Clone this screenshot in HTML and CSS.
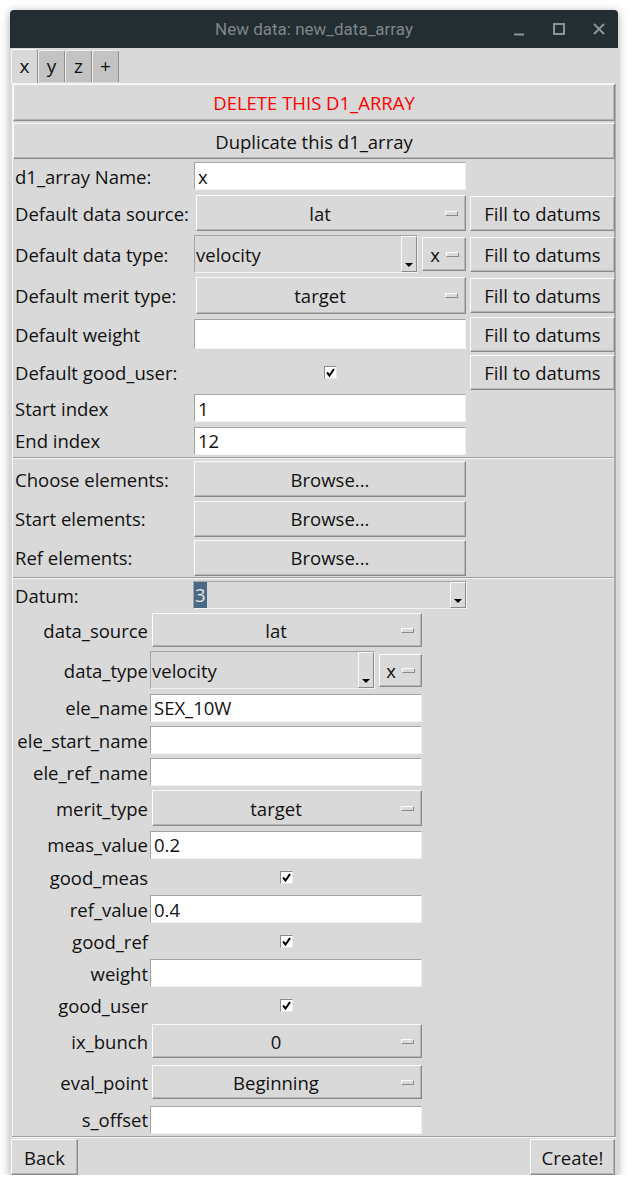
FILE: index.html
```html
<!DOCTYPE html>
<html>
<head>
<meta charset="utf-8">
<link rel="stylesheet" href="styles.css">
</head>
<body>
<div class="window">
  <div class="titlebar">
    <span class="title">New data: new_data_array</span>
    <div class="wctrls">
      <svg class="wc" width="14" height="14" viewBox="0 0 14 14"><path d="M2 12.5h10" stroke="#8a9499" stroke-width="2"/></svg>
      <svg class="wc" width="14" height="14" viewBox="0 0 14 14"><rect x="2" y="2" width="10" height="10" fill="none" stroke="#8a9499" stroke-width="2"/></svg>
      <svg class="wc" width="14" height="14" viewBox="0 0 14 14"><path d="M2 2l10 10M12 2L2 12" stroke="#8a9499" stroke-width="2"/></svg>
    </div>
  </div>
  <div class="tabs">
    <div class="tab sel">x</div>
    <div class="tab">y</div>
    <div class="tab">z</div>
    <div class="tab">+</div>
  </div>
  <div class="content">
    <div class="btn wide red h37 mt1">DELETE THIS D1_ARRAY</div>
    <div class="btn wide h36 mt2">Duplicate this d1_array</div>

    <div class="grid topgrid">
      <div class="lbl">d1_array Name:</div>
      <div class="cell"><div class="entry w272 h28">x</div></div>
      <div class="cell"></div>

      <div class="lbl">Default data source:</div>
      <div class="cell"><div class="mbtn w270 ml2 h36"><span class="mtext">lat</span><span class="ind"></span></div></div>
      <div class="cell"><div class="btn fill">Fill to datums</div></div>

      <div class="lbl">Default data type:</div>
      <div class="cell row">
        <div class="combo w224 h38"><span class="ctext">velocity</span><span class="carrow"><span class="tri"></span></span></div>
        <div class="mbtn small w44 h34"><span class="stext">x</span><span class="ind"></span></div>
      </div>
      <div class="cell"><div class="btn fill">Fill to datums</div></div>

      <div class="lbl">Default merit type:</div>
      <div class="cell"><div class="mbtn w270 ml2 h37"><span class="mtext">target</span><span class="ind"></span></div></div>
      <div class="cell"><div class="btn fill">Fill to datums</div></div>

      <div class="lbl">Default weight</div>
      <div class="cell"><div class="entry w272 h30"></div></div>
      <div class="cell"><div class="btn fill">Fill to datums</div></div>

      <div class="lbl">Default good_user:</div>
      <div class="cell center w272"><span class="chk"><svg width="11" height="11" viewBox="0 0 11 11"><path d="M2 5.5l2.5 3L9 2" fill="none" stroke="#000" stroke-width="2"/></svg></span></div>
      <div class="cell"><div class="btn fill">Fill to datums</div></div>

      <div class="lbl">Start index</div>
      <div class="cell"><div class="entry w272 h28">1</div></div>
      <div class="cell"></div>

      <div class="lbl">End index</div>
      <div class="cell"><div class="entry w272 h28">12</div></div>
      <div class="cell"></div>
    </div>

    <div class="sep"></div>

    <div class="grid browsegrid">
      <div class="lbl">Choose elements:</div>
      <div class="cell"><div class="btn w272 h36">Browse...</div></div>
      <div class="lbl">Start elements:</div>
      <div class="cell"><div class="btn w272 h36">Browse...</div></div>
      <div class="lbl">Ref elements:</div>
      <div class="cell"><div class="btn w272 h36">Browse...</div></div>
    </div>

    <div class="sep"></div>

    <div class="grid datumrow">
      <div class="lbl">Datum:</div>
      <div class="cell"><div class="combo datum w274 h28"><span class="ctext"><span class="selnum">3</span></span><span class="carrow"><span class="tri"></span></span></div></div>
    </div>

    <div class="grid dgrid">
      <div class="rl">data_source</div>
      <div class="cell"><div class="mbtn w270 ml2 h34"><span class="mtext">lat</span><span class="ind"></span></div></div>

      <div class="rl">data_type</div>
      <div class="cell row">
        <div class="combo w225 h38"><span class="ctext">velocity</span><span class="carrow"><span class="tri"></span></span></div>
        <div class="mbtn small w43 h33"><span class="stext">x</span><span class="ind"></span></div>
      </div>

      <div class="rl">ele_name</div>
      <div class="cell"><div class="entry w272 h28">SEX_10W</div></div>

      <div class="rl">ele_start_name</div>
      <div class="cell"><div class="entry w272 h28"></div></div>

      <div class="rl">ele_ref_name</div>
      <div class="cell"><div class="entry w272 h28"></div></div>

      <div class="rl">merit_type</div>
      <div class="cell"><div class="mbtn w270 ml2 h36"><span class="mtext">target</span><span class="ind"></span></div></div>

      <div class="rl">meas_value</div>
      <div class="cell"><div class="entry w272 h28">0.2</div></div>

      <div class="rl">good_meas</div>
      <div class="cell center w272"><span class="chk"><svg width="11" height="11" viewBox="0 0 11 11"><path d="M2 5.5l2.5 3L9 2" fill="none" stroke="#000" stroke-width="2"/></svg></span></div>

      <div class="rl">ref_value</div>
      <div class="cell"><div class="entry w272 h28">0.4</div></div>

      <div class="rl">good_ref</div>
      <div class="cell center w272"><span class="chk"><svg width="11" height="11" viewBox="0 0 11 11"><path d="M2 5.5l2.5 3L9 2" fill="none" stroke="#000" stroke-width="2"/></svg></span></div>

      <div class="rl">weight</div>
      <div class="cell"><div class="entry w272 h28"></div></div>

      <div class="rl">good_user</div>
      <div class="cell center w272"><span class="chk"><svg width="11" height="11" viewBox="0 0 11 11"><path d="M2 5.5l2.5 3L9 2" fill="none" stroke="#000" stroke-width="2"/></svg></span></div>

      <div class="rl">ix_bunch</div>
      <div class="cell"><div class="mbtn w270 ml2 h34"><span class="mtext">0</span><span class="ind"></span></div></div>

      <div class="rl">eval_point</div>
      <div class="cell"><div class="mbtn w270 ml2 h34"><span class="mtext">Beginning</span><span class="ind"></span></div></div>

      <div class="rl">s_offset</div>
      <div class="cell"><div class="entry w272 h28"></div></div>
    </div>
  </div>
  <div class="sep bsep"></div>
  <div class="bottombar">
    <div class="btn back">Back</div>
    <div class="btn create">Create!</div>
  </div>
</div>
</body>
</html>
```

FILE: styles.css
```css
* { box-sizing: border-box; }
html, body { margin: 0; padding: 0; }
body {
  background: #ffffff;
  font-family: "Open Sans", "Noto Sans", sans-serif;
  font-size: 18.5px;
  color: #111;
}
.window {
  margin: 10px 0 0 10px;
  width: 608px;
  background: #d9d9d9;
  box-shadow: 0 2px 10px rgba(0,0,0,0.35);
  border-radius: 4px 4px 0 0;
  display: flex;
  flex-direction: column;
}
.titlebar {
  height: 38px;
  background: #232d32;
  border-radius: 4px 4px 0 0;
  position: relative;
  display: flex;
  align-items: center;
  justify-content: center;
}
.title {
  font-family: Roboto, "Noto Sans", sans-serif;
  font-size: 17px;
  color: #7d878c;
}
.wctrls {
  position: absolute;
  right: 12px;
  top: 12px;
  display: flex;
  gap: 26px;
}
.wc { display: block; }
.tabs {
  height: 35px;
  display: flex;
  align-items: flex-end;
  padding-left: 1px;
}
.tab {
  width: 27px;
  height: 32px;
  margin-bottom: 1px;
  background: #c3c3c3;
  border: 1px solid #eeeeee;
  border-right-color: #8f8f8f;
  border-bottom: none;
  border-radius: 3px 3px 0 0;
  display: flex;
  align-items: center;
  justify-content: center;
  font-size: 19px;
  padding-bottom: 2px;
}
.tab.sel {
  background: #d9d9d9;
  height: 34px;
  margin-bottom: 0;
  border-color: #f4f4f4;
  border-right-color: #8f8f8f;
}
.content {
  margin: 0 2px;
  border-top: 2px solid #f2f2f2;
  border-left: 1px solid #f2f2f2;
  border-right: 2px solid #a9a9a9;
  display: flex;
  flex-direction: column;
}
.btn {
  background: #d9d9d9;
  border: 1px solid;
  border-color: #fbfbfb #8a8a8a #8a8a8a #fbfbfb;
  box-shadow: inset -1px -1px 0 #b5b5b5;
  display: flex;
  align-items: center;
  justify-content: center;
  white-space: nowrap;
}
.wide { width: 602px; }
.red { color: #ff0000; }
.mt1 { margin-top: -1px; }
.mt2 { margin-top: 2px; }
.h28 { height: 28px; }
.h30 { height: 30px; }
.h33 { height: 33px; }
.h34 { height: 34px; }
.h36 { height: 36px; }
.h37 { height: 37px; }
.h38 { height: 38px; }
.w43 { width: 43px; }
.w44 { width: 44px; }
.w224 { width: 224px; }
.w225 { width: 225px; }
.w270 { width: 270px; }
.w272 { width: 272px; }
.w274 { width: 274px; }
.ml2 { margin-left: 2px; }
.grid { display: grid; }
.topgrid {
  grid-template-columns: 181px 276px 145px;
  grid-template-rows: 34px 40px 42px 40px 38px 39px 32px 33px;
  align-items: center;
}
.browsegrid {
  grid-template-columns: 181px 276px;
  grid-template-rows: 40px 39px 39px;
  align-items: center;
}
.datumrow {
  grid-template-columns: 180px 276px;
  grid-template-rows: 32px;
  align-items: center;
}
.dgrid {
  grid-template-columns: 137px 276px;
  grid-template-rows: 38px 42px 33px 32px 32px 40px 33px 32px 32px 32px 32px 32px 40px 42px 33px;
  align-items: center;
}
.lbl {
  padding-left: 2px;
  white-space: nowrap;
}
.rl {
  text-align: right;
  padding-right: 2px;
  white-space: nowrap;
}
.cell { display: flex; align-items: center; }
.cell.row { gap: 4px; }
.cell.center { justify-content: center; }
.fill { width: 145px; height: 35px; }
.entry {
  background: #ffffff;
  border: 1px solid;
  border-color: #a3a3a3 #f3f3f3 #f3f3f3 #a3a3a3;
  display: flex;
  align-items: center;
  padding-left: 3px;
  white-space: nowrap;
}
.mbtn {
  background: #d9d9d9;
  border: 1px solid;
  border-color: #fbfbfb #8a8a8a #8a8a8a #fbfbfb;
  box-shadow: inset -1px -1px 0 #b5b5b5;
  display: flex;
  align-items: center;
}
.mtext {
  flex: 1;
  text-align: center;
  padding-left: 2px;
}
.ind {
  width: 13px;
  height: 5px;
  background: #d9d9d9;
  border: 1px solid;
  border-color: #fafafa #8a8a8a #8a8a8a #fafafa;
  margin-right: 7px;
  margin-left: 4px;
}
.mbtn.small .stext {
  flex: 1;
  text-align: right;
  padding-right: 2px;
}
.mbtn.small .ind { margin-left: 4px; margin-right: 6px; }
.combo {
  background: #d9d9d9;
  border: 1px solid;
  border-color: #a3a3a3 #f3f3f3 #f3f3f3 #a3a3a3;
  display: flex;
  align-items: stretch;
}
.ctext {
  flex: 1;
  display: flex;
  align-items: center;
  padding-left: 1px;
  white-space: nowrap;
}
.carrow {
  width: 16px;
  background: #d9d9d9;
  border: 1px solid;
  border-color: #f8f8f8 #8a8a8a #8a8a8a #f8f8f8;
  display: flex;
  align-items: flex-end;
  justify-content: center;
  padding-bottom: 4px;
}
.tri {
  width: 0;
  height: 0;
  border-left: 4px solid transparent;
  border-right: 4px solid transparent;
  border-top: 4px solid #000;
}
.combo.datum .ctext { padding-left: 0; }
.selnum {
  background: #4a6984;
  color: #e6e6e6;
  padding: 0 1px;
  line-height: 26px;
}
.chk {
  width: 13px;
  height: 13px;
  background: #ffffff;
  border: 1px solid;
  border-color: #8a8a8a #e8e8e8 #e8e8e8 #8a8a8a;
  display: flex;
  align-items: center;
  justify-content: center;
}
.chk svg { display: block; }
.sep {
  height: 2px;
  border-top: 1px solid #a0a0a0;
  border-bottom: 1px solid #f4f4f4;
}
.bsep { margin: 0 2px; }
.bottombar {
  height: 37px;
  display: flex;
  justify-content: space-between;
  align-items: flex-end;
  padding: 0 3px 0 1px;
}
.back { width: 67px; height: 36px; }
.create { width: 85px; height: 36px; }
```
